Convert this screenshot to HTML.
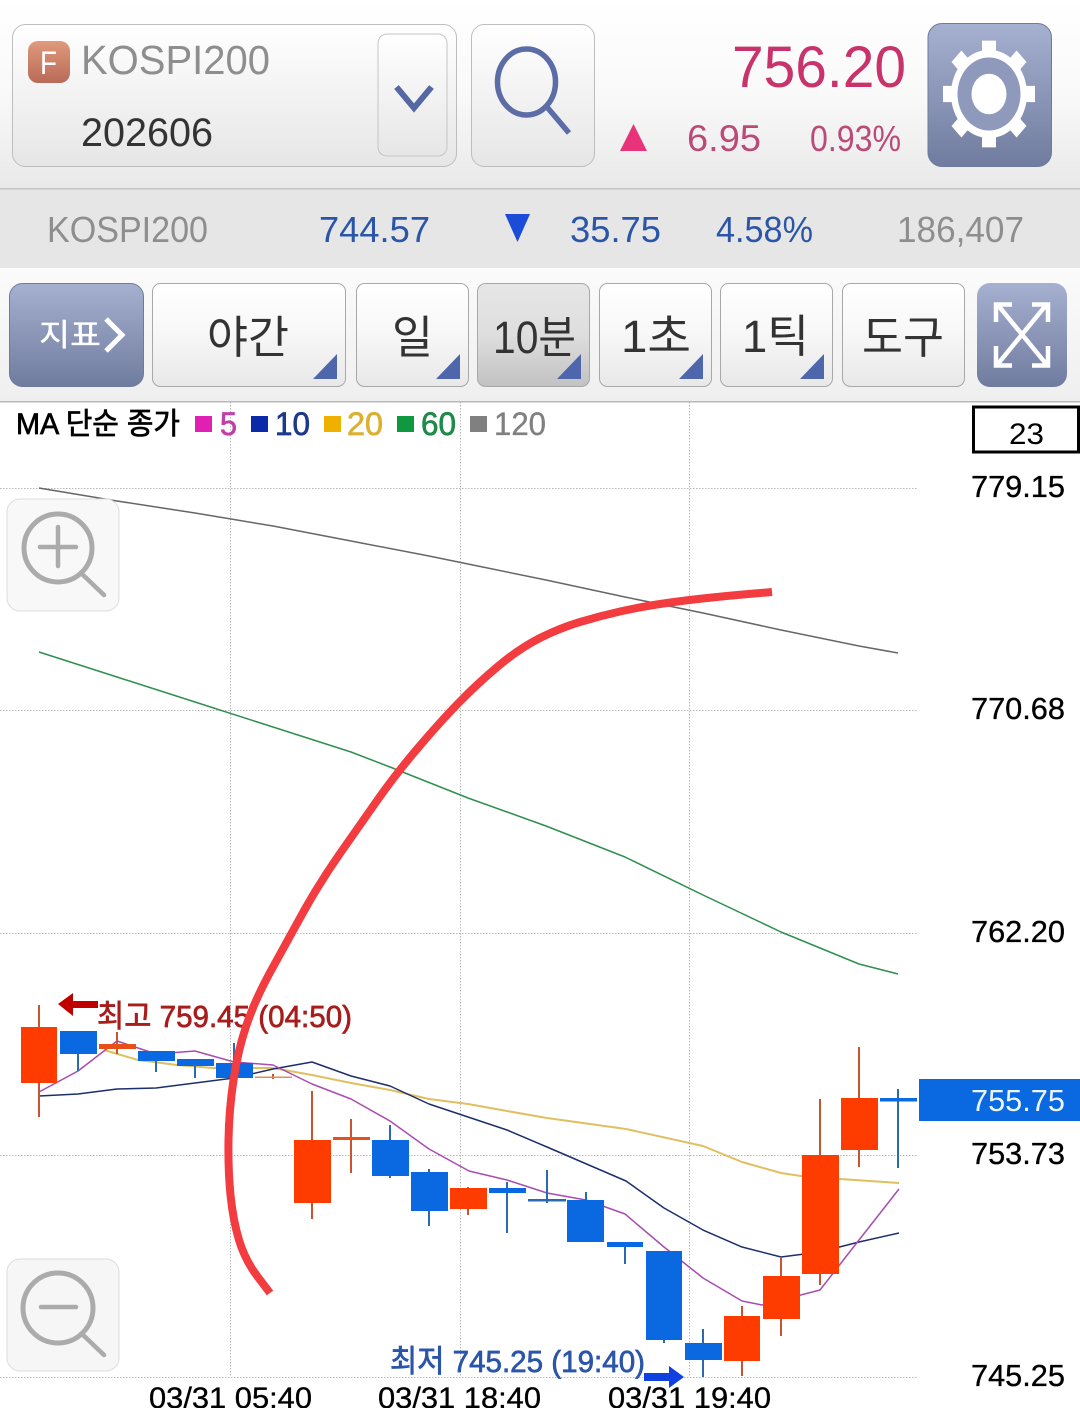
<!DOCTYPE html>
<html lang="ko"><head><meta charset="utf-8"><title>KOSPI200</title>
<style>
html,body{margin:0;padding:0;background:#fff;width:1080px;height:1408px;overflow:hidden}
svg{display:block}
text{font-family:"Liberation Sans","Noto Sans CJK KR",sans-serif}
.b{stroke-width:.7px;paint-order:stroke}
.m{stroke-width:.35px}
</style></head><body>
<svg width="1080" height="1408" viewBox="0 0 1080 1408" xmlns="http://www.w3.org/2000/svg">
<defs>
<linearGradient id="top" x1="0" y1="0" x2="0" y2="1"><stop offset="0" stop-color="#ffffff"/><stop offset=".5" stop-color="#f9f9f9"/><stop offset="1" stop-color="#e9e9e9"/></linearGradient>
<linearGradient id="bar" x1="0" y1="0" x2="0" y2="1"><stop offset="0" stop-color="#fbfbfb"/><stop offset="1" stop-color="#efefef"/></linearGradient>
<linearGradient id="btn" x1="0" y1="0" x2="0" y2="1"><stop offset="0" stop-color="#ffffff"/><stop offset=".45" stop-color="#f8f8f8"/><stop offset="1" stop-color="#e8e8e8"/></linearGradient>
<linearGradient id="sym" x1="0" y1="0" x2="0" y2="1"><stop offset="0" stop-color="#ffffff"/><stop offset="1" stop-color="#e6e6e6"/></linearGradient>
<linearGradient id="act" x1="0" y1="0" x2="0" y2="1"><stop offset="0" stop-color="#e6e6e6"/><stop offset=".5" stop-color="#dedede"/><stop offset="1" stop-color="#c2c2c2"/></linearGradient>
<linearGradient id="blu" x1="0" y1="0" x2="0" y2="1"><stop offset="0" stop-color="#a6b0d0"/><stop offset="1" stop-color="#707c9f"/></linearGradient>
<linearGradient id="ficon" x1="0" y1="0" x2="0" y2="1"><stop offset="0" stop-color="#e09a7c"/><stop offset="1" stop-color="#b96a58"/></linearGradient>
</defs>

<!-- backgrounds -->
<rect width="1080" height="188" fill="url(#top)"/>
<rect y="188" width="1080" height="1.5" fill="#c6c6c6"/>
<rect y="189.5" width="1080" height="79" fill="#e6e6e6"/>
<rect y="268" width="1080" height="133" fill="url(#bar)"/>
<rect y="401" width="1080" height="1.5" fill="#b8b8b8"/>

<!-- header -->
<rect x="12.5" y="24.5" width="444" height="142" rx="13" fill="url(#sym)" stroke="#bdbdbd"/>
<rect x="28" y="41" width="42" height="42" rx="10" fill="url(#ficon)"/>
<text x="40" y="74" font-size="32" fill="#fff" textLength="17" lengthAdjust="spacingAndGlyphs">F</text>
<text x="81" y="74" font-size="41" fill="#8e8e8e" textLength="189" lengthAdjust="spacingAndGlyphs">KOSPI200</text>
<text x="81" y="146" font-size="40" fill="#333" textLength="132" lengthAdjust="spacingAndGlyphs">202606</text>
<rect x="378" y="34" width="69" height="122" rx="9" fill="url(#sym)" stroke="#c4c4c4"/>
<path d="M396.500 87 L414 108 L431.500 87" fill="none" stroke="#5568a4" stroke-width="6"/>

<rect x="471.500" y="24.500" width="123" height="142" rx="13" fill="url(#sym)" stroke="#bdbdbd"/>
<ellipse cx="526.500" cy="82" rx="29" ry="33" fill="none" stroke="#5b6ca6" stroke-width="5.500"/>
<path d="M547 107 L569 133" fill="none" stroke="#5b6ca6" stroke-width="5.500"/>

<text x="732" y="87" font-size="58" fill="#c8336b" textLength="174" lengthAdjust="spacingAndGlyphs">756.20</text>
<path d="M620 151 L633.500 124 L647 151 Z" fill="#e8337a"/>
<text x="687" y="151" font-size="37" fill="#bc4a78" textLength="74" lengthAdjust="spacingAndGlyphs">6.95</text>
<text x="810" y="151" font-size="36" fill="#bc4a78" textLength="91" lengthAdjust="spacingAndGlyphs">0.93%</text>

<rect x="928" y="23.500" width="123.500" height="143" rx="14" fill="url(#blu)" stroke="#6f7b9e"/>
<g transform="translate(989,94) scale(1,1.16)" fill="#fff">
<rect x="-7" y="-46" width="14" height="14"/>
<rect x="-7" y="-46" width="14" height="14" transform="rotate(45)"/>
<rect x="-7" y="-46" width="14" height="14" transform="rotate(90)"/>
<rect x="-7" y="-46" width="14" height="14" transform="rotate(135)"/>
<rect x="-7" y="-46" width="14" height="14" transform="rotate(180)"/>
<rect x="-7" y="-46" width="14" height="14" transform="rotate(225)"/>
<rect x="-7" y="-46" width="14" height="14" transform="rotate(270)"/>
<rect x="-7" y="-46" width="14" height="14" transform="rotate(315)"/>
<circle r="38"/>
<circle r="31.500" fill="#8e99bb"/>
<circle r="17.500"/>
</g>

<!-- second row -->
<text x="47" y="242" font-size="36" fill="#8e8e8e" textLength="161" lengthAdjust="spacingAndGlyphs">KOSPI200</text>
<text x="319" y="242" font-size="36" fill="#2a55a8" textLength="111" lengthAdjust="spacingAndGlyphs">744.57</text>
<path d="M505 214 L530 214 L517.500 242 Z" fill="#1a4cd8"/>
<text x="570" y="242" font-size="36" fill="#2a55a8" textLength="91" lengthAdjust="spacingAndGlyphs">35.75</text>
<text x="716" y="242" font-size="36" fill="#2a55a8" textLength="97" lengthAdjust="spacingAndGlyphs">4.58%</text>
<text x="897" y="242" font-size="36" fill="#8e8e8e" textLength="127" lengthAdjust="spacingAndGlyphs">186,407</text>

<!-- toolbar -->
<rect x="9.500" y="283.500" width="134" height="103" rx="13" fill="url(#blu)" stroke="#6f7b9e"/>
<text x="39" y="346" font-size="31" fill="#fff" class="m" stroke="#fff" textLength="62" lengthAdjust="spacingAndGlyphs">지표</text>
<path d="M106 319 L122 335 L106 351" fill="none" stroke="#fff" stroke-width="5"/>

<rect x="152.500" y="283.500" width="193" height="103" rx="8" fill="url(#btn)" stroke="#a8a8a8"/>
<text x="207" y="353" font-size="45" fill="#333" textLength="82" lengthAdjust="spacingAndGlyphs">야간</text>
<path d="M313 379 L337 354 L337 379 Z" fill="#4e66ac"/>

<rect x="356.500" y="283.500" width="112" height="103" rx="8" fill="url(#btn)" stroke="#a8a8a8"/>
<text x="392" y="353" font-size="45" fill="#333" textLength="41" lengthAdjust="spacingAndGlyphs">일</text>
<path d="M436 379 L460 354 L460 379 Z" fill="#4e66ac"/>

<rect x="477.500" y="283.500" width="112" height="103" rx="8" fill="url(#act)" stroke="#a8a8a8"/>
<text x="493" y="353" font-size="45" fill="#333" textLength="83" lengthAdjust="spacingAndGlyphs">10분</text>
<path d="M557 379 L581 354 L581 379 Z" fill="#4e66ac"/>

<rect x="599.500" y="283.500" width="112" height="103" rx="8" fill="url(#btn)" stroke="#a8a8a8"/>
<text x="621" y="352" font-size="45" fill="#333" textLength="70" lengthAdjust="spacingAndGlyphs">1초</text>
<path d="M679 379 L703 354 L703 379 Z" fill="#4e66ac"/>

<rect x="720.500" y="283.500" width="112" height="103" rx="8" fill="url(#btn)" stroke="#a8a8a8"/>
<text x="742" y="352" font-size="45" fill="#333" textLength="67" lengthAdjust="spacingAndGlyphs">1틱</text>
<path d="M800 379 L824 354 L824 379 Z" fill="#4e66ac"/>

<rect x="842.500" y="283.500" width="122" height="103" rx="8" fill="url(#btn)" stroke="#a8a8a8"/>
<text x="862" y="353" font-size="45" fill="#333" textLength="82" lengthAdjust="spacingAndGlyphs">도구</text>

<rect x="977" y="283" width="90" height="104" rx="13" fill="url(#blu)"/>
<g fill="none" stroke="#fff" stroke-width="4.500">
<path d="M997 304 L1047 365 M1047 304 L997 365"/>
<path d="M1012 304.500 L996 304.500 L996 322"/>
<path d="M1032 304.500 L1048 304.500 L1048 322"/>
<path d="M1012 365.500 L996 365.500 L996 346"/>
<path d="M1032 365.500 L1048 365.500 L1048 346"/>
</g>

<!-- grid -->
<g stroke="#b8b8b8" stroke-width="1" stroke-dasharray="1.500 1.500" fill="none">
<path d="M0 488.500H917M0 710.500H917M0 933.500H917M0 1155.500H917M0 1377.500H917"/>
<path d="M230.500 402V1377M460.500 402V1377M689.500 402V1377"/>
</g>

<!-- MA lines -->
<g fill="none" stroke-width="1.500" stroke-linejoin="round">
<polyline stroke="#666" points="39,488 117,501 195,513 273,526 351,541 429,556 468,564 546,580 625,597 703,613 781,630 859,646 898,653"/>
<polyline stroke="#2f8f4f" points="39,652 117,677 195,702 273,727 351,752 390,767 468,798 546,826 625,857 703,895 781,932 859,964 898,974"/>
<polyline stroke="#dfc060" stroke-width="2" points="104,1050 138,1060 177,1065 213,1068 273,1068 312,1075 351,1083 390,1090 429,1099 468,1104 507,1111 547,1118 626,1129 703,1146 742,1162 781,1173 801,1176 840,1179 899,1183"/>
<polyline stroke="#1c2f6c" points="39,1096 78,1094 117,1089 156,1088 195,1083 234,1078 273,1069 312,1062 351,1076 390,1086 429,1104 468,1117 507,1130 547,1147 626,1181 664,1208 703,1230 742,1247 781,1257 820,1252 859,1242 899,1233"/>
<polyline stroke="#a84cb0" points="39,1092 78,1071 117,1041 156,1054 195,1051 234,1062 273,1065 312,1084 351,1099 390,1121 429,1149 469,1171 507,1180 547,1193 586,1200 625,1214 664,1247 703,1278 742,1301 762,1305 820,1290 859,1240 899,1189"/>
</g>

<!-- candles -->
<g stroke="#c8552f" stroke-width="2">
<path d="M39 1005V1117M117 1032V1054M273 1074V1079M312 1091V1219M351 1119V1173M468 1187V1215M742 1306V1376M781 1258V1336M820 1099V1285M859 1047V1167"/>
</g>
<g stroke="#2a6ab0" stroke-width="2">
<path d="M78 1054V1071M156 1061V1072M195 1066V1078M234 1043V1063M390 1125V1178M429 1169V1226M507 1182V1233M547 1170V1203M586 1192V1200M625 1247V1264M664 1340V1343M703 1329V1377M898 1089V1168"/>
</g>
<g fill="#0a68e0">
<rect x="60" y="1031" width="37" height="23"/>
<rect x="138" y="1051" width="37" height="10"/>
<rect x="177" y="1059" width="37" height="7"/>
<rect x="216" y="1063" width="37" height="15"/>
<rect x="372" y="1140" width="37" height="36"/>
<rect x="411" y="1172" width="37" height="39"/>
<rect x="489" y="1188" width="37" height="5"/>
<rect x="528" y="1199" width="38" height="2.500" fill="#2a6ab0"/>
<rect x="567" y="1200" width="37" height="42"/>
<rect x="607" y="1242" width="36" height="5"/>
<rect x="646" y="1251" width="36" height="89"/>
<rect x="685" y="1343" width="37" height="17"/>
<rect x="880" y="1098" width="37" height="3.500"/>
</g>
<g fill="#ff3c00">
<rect x="21" y="1027" width="36" height="56"/>
<rect x="99" y="1044" width="37" height="5" fill="#e8501a"/>
<rect x="255" y="1076.500" width="37" height="1.500" fill="#d8905a"/>
<rect x="294" y="1140" width="37" height="63"/>
<rect x="333" y="1137" width="37" height="3" fill="#e8501a"/>
<rect x="450" y="1188" width="37" height="21"/>
<rect x="724" y="1316" width="36" height="45"/>
<rect x="763" y="1276" width="37" height="43"/>
<rect x="802" y="1155" width="37" height="119"/>
<rect x="841" y="1098" width="37" height="52"/>
</g>

<!-- legend -->
<text x="16" y="434" font-size="30" fill="#000" stroke="#000" class="b" textLength="164" lengthAdjust="spacingAndGlyphs">MA 단순 종가</text>
<rect x="195" y="416" width="17" height="16" fill="#e020b0"/>
<text x="220" y="435" font-size="32" fill="#c040a8" stroke="#c040a8" class="b" textLength="17" lengthAdjust="spacingAndGlyphs">5</text>
<rect x="251" y="416" width="17" height="16" fill="#0a2aa8"/>
<text x="275" y="435" font-size="32" fill="#1c3a8c" stroke="#1c3a8c" class="b" textLength="35" lengthAdjust="spacingAndGlyphs">10</text>
<rect x="324" y="416" width="17" height="16" fill="#f0b000"/>
<text x="347" y="435" font-size="32" fill="#dcb030" stroke="#dcb030" class="b" textLength="36" lengthAdjust="spacingAndGlyphs">20</text>
<rect x="397" y="416" width="17" height="16" fill="#109840"/>
<text x="421" y="435" font-size="32" fill="#1f8a4a" stroke="#1f8a4a" class="b" textLength="35" lengthAdjust="spacingAndGlyphs">60</text>
<rect x="470" y="416" width="17" height="16" fill="#808080"/>
<text x="494" y="435" font-size="32" fill="#808080" stroke="#808080" class="m" textLength="52" lengthAdjust="spacingAndGlyphs">120</text>

<!-- axis -->
<rect x="973.500" y="407" width="105" height="45" fill="#fff" stroke="#000" stroke-width="3"/>
<text x="1009" y="444" font-size="30" fill="#000" textLength="35" lengthAdjust="spacingAndGlyphs">23</text>
<text x="971" y="497" font-size="31" fill="#000" stroke="#000" class="m" textLength="94" lengthAdjust="spacingAndGlyphs">779.15</text>
<text x="971" y="719" font-size="31" fill="#000" stroke="#000" class="m" textLength="94" lengthAdjust="spacingAndGlyphs">770.68</text>
<text x="971" y="942" font-size="31" fill="#000" stroke="#000" class="m" textLength="94" lengthAdjust="spacingAndGlyphs">762.20</text>
<rect x="919" y="1079" width="161" height="42" fill="#0a68e0"/>
<text x="971" y="1111" font-size="31" fill="#eaf6ff" textLength="94" lengthAdjust="spacingAndGlyphs">755.75</text>
<text x="971" y="1164" font-size="31" fill="#000" stroke="#000" class="m" textLength="94" lengthAdjust="spacingAndGlyphs">753.73</text>
<text x="971" y="1386" font-size="31" fill="#000" stroke="#000" class="m" textLength="94" lengthAdjust="spacingAndGlyphs">745.25</text>

<!-- hi/lo labels -->
<path d="M58 1004 L73 993 L73 1001 L98 1001 L98 1008 L73 1008 L73 1016 Z" fill="#c00000"/>
<text x="97" y="1027" font-size="31" fill="#a81c1c" stroke="#a81c1c" class="b" textLength="255" lengthAdjust="spacingAndGlyphs">최고 759.45 (04:50)</text>
<text x="390" y="1372" font-size="31" fill="#2a55a8" stroke="#2a55a8" class="b" textLength="255" lengthAdjust="spacingAndGlyphs">최저 745.25 (19:40)</text>
<path d="M684 1377 L669 1366 L669 1373 L644 1373 L644 1381 L669 1381 L669 1388 Z" fill="#1040e0"/>

<!-- date labels -->
<text x="149" y="1408" font-size="30" fill="#000" stroke="#000" class="m" textLength="163" lengthAdjust="spacingAndGlyphs">03/31 05:40</text>
<text x="378" y="1408" font-size="30" fill="#000" stroke="#000" class="m" textLength="163" lengthAdjust="spacingAndGlyphs">03/31 18:40</text>
<text x="608" y="1408" font-size="30" fill="#000" stroke="#000" class="m" textLength="163" lengthAdjust="spacingAndGlyphs">03/31 19:40</text>

<!-- red annotation -->
<path d="M772 592 L748.500 594 Q725 596 702.500 598.500 Q680 601 660 604 Q640 607 620 611.500 Q600 616 580 622 Q560 628 540 638 Q520 648 499 665.500 Q478 683 459 702.500 Q440 722 417.500 748.500 Q395 775 377.500 800 Q360 825 340 853.500 Q320 882 302.500 913.500 Q285 945 270 972.500 Q255 1000 246.500 1025 Q238 1050 233.500 1080 Q229 1110 228.500 1140 Q228 1170 230.500 1195 Q233 1220 239 1240 Q245 1260 257.500 1276.500 L270 1293" fill="none" stroke="#f23c3f" stroke-width="8"/>

<!-- zoom buttons -->
<rect x="7" y="499" width="112" height="112" rx="13" fill="#f8f8f8" stroke="#dcdcdc"/>
<circle cx="58" cy="548" r="34" fill="none" stroke="#ababab" stroke-width="5"/>
<path d="M82 574 L104 595 M58 527 V566 M40 547 H76" fill="none" stroke="#ababab" stroke-width="4.500" stroke-linecap="round"/>
<rect x="7" y="1259" width="112" height="112" rx="13" fill="#f6f6f6" stroke="#dcdcdc"/>
<circle cx="58" cy="1308" r="35" fill="none" stroke="#ababab" stroke-width="5"/>
<path d="M82 1334 L104 1355 M41 1307 H76" fill="none" stroke="#ababab" stroke-width="4.500" stroke-linecap="round"/>
</svg>
</body></html>
